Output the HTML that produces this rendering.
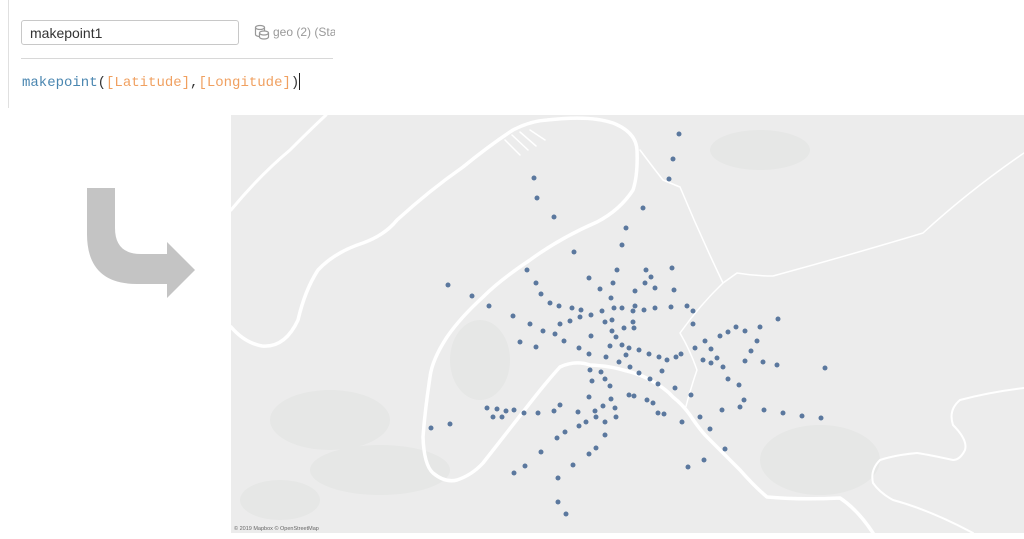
<!DOCTYPE html>
<html><head><meta charset="utf-8"><style>
html,body{margin:0;padding:0;background:#fff;width:1024px;height:539px;overflow:hidden;position:relative;font-family:"Liberation Sans",sans-serif}
.vl{position:absolute;left:8px;top:0;width:1px;height:108px;background:#e0e0e0}
.inp{position:absolute;left:21px;top:20px;width:218px;height:25px;border:1px solid #c8c8c8;border-radius:3px;box-sizing:border-box;font-size:14px;color:#333;padding:4px 0 0 8px;line-height:16px}
.geo{position:absolute;left:273px;top:25px;font-size:12px;color:#999;width:62px;overflow:hidden;white-space:nowrap}
.sep{position:absolute;left:21px;top:58px;width:312px;height:1px;background:#d8d8d8}
.f{position:absolute;left:22px;top:73px;font-family:"Liberation Mono",monospace;font-size:14px;white-space:nowrap;color:#333;line-height:18px}
.b{color:#4a86b0}.o{color:#f0a060}
.cur{display:inline-block;width:1px;height:17px;background:#222;vertical-align:-4px}
.map{position:absolute;left:231px;top:115px}
</style></head><body>
<div class="vl"></div>
<div class="inp">makepoint1</div>
<svg style="position:absolute;left:254px;top:24px" width="16" height="16" viewBox="0 0 16 16"><g fill="none" stroke="#999" stroke-width="1.2"><ellipse cx="6" cy="3.5" rx="4.5" ry="2"/><path d="M1.5 3.5v7c0 1.1 2 2 4.5 2M10.5 3.5v3"/><ellipse cx="10" cy="9" rx="4.5" ry="2"/><path d="M5.5 9v4c0 1.1 2 2 4.5 2s4.5-.9 4.5-2V9"/></g></svg>
<div class="geo">geo (2) (Sta</div>
<div class="sep"></div>
<div class="f"><span class="b">makepoint</span>(<span class="o">[Latitude]</span>,<span class="o">[Longitude]</span>)<span class="cur"></span></div>
<svg style="position:absolute;left:0;top:0" width="230" height="330"><path d="M87,188 H115 V228 Q115,254 141,254 H167 V242 L195,270 L167,298 V284 H137 Q87,284 87,234 Z" fill="#c4c4c4"/></svg>
<svg class="map" width="793" height="418" viewBox="231 115 793 418">
<rect x="231" y="115" width="793" height="418" fill="#ececec"/>
<g fill="#e6e7e6">
<ellipse cx="330" cy="420" rx="60" ry="30"/><ellipse cx="380" cy="470" rx="70" ry="25"/><ellipse cx="480" cy="360" rx="30" ry="40"/>
<ellipse cx="820" cy="460" rx="60" ry="35"/><ellipse cx="760" cy="150" rx="50" ry="20"/><ellipse cx="280" cy="500" rx="40" ry="20"/>
</g>
<g fill="none" stroke="#fff" stroke-linecap="round" stroke-linejoin="round">
<path stroke-width="3" d="M231,210 Q260,175 290,150 Q310,130 326,115"/>
<path stroke-width="3.5" d="M231,327 Q245,343 262,346 Q285,348 298,320 Q305,290 318,270 Q335,252 363,243 Q385,235 397,220 Q430,190 463,167 Q490,145 513,130 Q530,121 547,120 Q590,115 613,123 Q636,132 637,150 Q638,175 633,190 Q620,210 597,222 Q560,238 530,260 Q500,280 483,297 Q460,318 447,337 Q432,360 430,377 Q425,410 423,437 Q424,465 433,473 Q445,483 457,480 Q472,475 483,463 Q505,435 530,403 Q548,380 560,367 Q575,360 590,365 Q610,366 623,370 Q640,374 650,380 Q665,388 673,397 Q683,405 690,415 Q700,430 707,437 Q725,455 740,470 Q755,487 767,497 Q800,500 840,498 Q858,510 873,533"/>
<path stroke-width="1.5" d="M640,150 Q655,170 663,180 Q675,185 680,187 Q700,235 723,283 Q730,278 737,273 Q755,276 773,276 Q850,255 923,233 Q970,190 1024,153"/>
<path stroke-width="1.5" d="M723,283 Q700,305 680,333 Q690,350 697,370 Q690,390 685,410"/>
<path stroke-width="2" d="M1024,388 Q990,392 960,400 Q948,410 953,425 Q968,440 965,450 Q960,460 953,460 Q930,455 917,453 Q895,455 880,460 Q870,470 873,483 Q880,493 893,500 Q930,510 973,533"/>
<path stroke-width="1.5" d="M505,140 L520,155 M512,135 L528,150 M520,132 L536,146 M530,130 L545,140"/>
</g>
<g fill="#5b789e">
<circle cx="534" cy="178" r="2.5"/><circle cx="537" cy="198" r="2.5"/><circle cx="554" cy="217" r="2.5"/><circle cx="643" cy="208" r="2.5"/><circle cx="626" cy="228" r="2.5"/><circle cx="622" cy="245" r="2.5"/><circle cx="574" cy="252" r="2.5"/><circle cx="448" cy="285" r="2.5"/><circle cx="472" cy="296" r="2.5"/><circle cx="489" cy="306" r="2.5"/><circle cx="513" cy="316" r="2.5"/><circle cx="527" cy="270" r="2.5"/><circle cx="536" cy="283" r="2.5"/><circle cx="541" cy="294" r="2.5"/><circle cx="550" cy="303" r="2.5"/><circle cx="559" cy="306" r="2.5"/><circle cx="572" cy="308" r="2.5"/><circle cx="581" cy="310" r="2.5"/><circle cx="589" cy="278" r="2.5"/><circle cx="600" cy="289" r="2.5"/><circle cx="617" cy="270" r="2.5"/><circle cx="613" cy="283" r="2.5"/><circle cx="635" cy="291" r="2.5"/><circle cx="646" cy="270" r="2.5"/><circle cx="645" cy="283" r="2.5"/><circle cx="611" cy="298" r="2.5"/><circle cx="614" cy="308" r="2.5"/><circle cx="622" cy="308" r="2.5"/><circle cx="633" cy="311" r="2.5"/><circle cx="635" cy="306" r="2.5"/><circle cx="644" cy="310" r="2.5"/><circle cx="602" cy="311" r="2.5"/><circle cx="591" cy="315" r="2.5"/><circle cx="580" cy="317" r="2.5"/><circle cx="570" cy="321" r="2.5"/><circle cx="560" cy="324" r="2.5"/><circle cx="530" cy="324" r="2.5"/><circle cx="543" cy="331" r="2.5"/><circle cx="555" cy="334" r="2.5"/><circle cx="564" cy="341" r="2.5"/><circle cx="520" cy="342" r="2.5"/><circle cx="536" cy="347" r="2.5"/><circle cx="591" cy="336" r="2.5"/><circle cx="605" cy="322" r="2.5"/><circle cx="612" cy="320" r="2.5"/><circle cx="633" cy="322" r="2.5"/><circle cx="634" cy="328" r="2.5"/><circle cx="624" cy="328" r="2.5"/><circle cx="612" cy="331" r="2.5"/><circle cx="616" cy="337" r="2.5"/><circle cx="610" cy="346" r="2.5"/><circle cx="622" cy="345" r="2.5"/><circle cx="629" cy="348" r="2.5"/><circle cx="639" cy="350" r="2.5"/><circle cx="649" cy="354" r="2.5"/><circle cx="626" cy="355" r="2.5"/><circle cx="606" cy="357" r="2.5"/><circle cx="579" cy="348" r="2.5"/><circle cx="589" cy="354" r="2.5"/><circle cx="619" cy="362" r="2.5"/><circle cx="630" cy="367" r="2.5"/><circle cx="639" cy="373" r="2.5"/><circle cx="590" cy="370" r="2.5"/><circle cx="601" cy="372" r="2.5"/><circle cx="605" cy="379" r="2.5"/><circle cx="592" cy="381" r="2.5"/><circle cx="610" cy="386" r="2.5"/><circle cx="629" cy="395" r="2.5"/><circle cx="634" cy="396" r="2.5"/><circle cx="647" cy="400" r="2.5"/><circle cx="589" cy="397" r="2.5"/><circle cx="611" cy="399" r="2.5"/><circle cx="615" cy="408" r="2.5"/><circle cx="603" cy="406" r="2.5"/><circle cx="616" cy="417" r="2.5"/><circle cx="595" cy="411" r="2.5"/><circle cx="596" cy="417" r="2.5"/><circle cx="605" cy="422" r="2.5"/><circle cx="586" cy="422" r="2.5"/><circle cx="578" cy="412" r="2.5"/><circle cx="579" cy="426" r="2.5"/><circle cx="560" cy="405" r="2.5"/><circle cx="554" cy="411" r="2.5"/><circle cx="538" cy="413" r="2.5"/><circle cx="524" cy="413" r="2.5"/><circle cx="514" cy="410" r="2.5"/><circle cx="506" cy="411" r="2.5"/><circle cx="497" cy="409" r="2.5"/><circle cx="487" cy="408" r="2.5"/><circle cx="493" cy="417" r="2.5"/><circle cx="502" cy="417" r="2.5"/><circle cx="450" cy="424" r="2.5"/><circle cx="431" cy="428" r="2.5"/><circle cx="565" cy="432" r="2.5"/><circle cx="557" cy="438" r="2.5"/><circle cx="605" cy="435" r="2.5"/><circle cx="596" cy="448" r="2.5"/><circle cx="589" cy="454" r="2.5"/><circle cx="541" cy="452" r="2.5"/><circle cx="573" cy="465" r="2.5"/><circle cx="525" cy="466" r="2.5"/><circle cx="514" cy="473" r="2.5"/><circle cx="558" cy="478" r="2.5"/><circle cx="558" cy="502" r="2.5"/><circle cx="566" cy="514" r="2.5"/>
<circle cx="679" cy="134" r="2.5"/><circle cx="673" cy="159" r="2.5"/><circle cx="669" cy="179" r="2.5"/><circle cx="672" cy="268" r="2.5"/><circle cx="651" cy="277" r="2.5"/><circle cx="655" cy="288" r="2.5"/><circle cx="674" cy="290" r="2.5"/><circle cx="655" cy="308" r="2.5"/><circle cx="671" cy="307" r="2.5"/><circle cx="687" cy="306" r="2.5"/><circle cx="693" cy="311" r="2.5"/><circle cx="693" cy="324" r="2.5"/><circle cx="778" cy="319" r="2.5"/><circle cx="760" cy="327" r="2.5"/><circle cx="745" cy="331" r="2.5"/><circle cx="736" cy="327" r="2.5"/><circle cx="728" cy="332" r="2.5"/><circle cx="720" cy="336" r="2.5"/><circle cx="705" cy="341" r="2.5"/><circle cx="695" cy="348" r="2.5"/><circle cx="711" cy="349" r="2.5"/><circle cx="757" cy="341" r="2.5"/><circle cx="751" cy="351" r="2.5"/><circle cx="717" cy="358" r="2.5"/><circle cx="703" cy="360" r="2.5"/><circle cx="711" cy="363" r="2.5"/><circle cx="723" cy="367" r="2.5"/><circle cx="745" cy="361" r="2.5"/><circle cx="763" cy="362" r="2.5"/><circle cx="777" cy="365" r="2.5"/><circle cx="825" cy="368" r="2.5"/><circle cx="681" cy="354" r="2.5"/><circle cx="676" cy="357" r="2.5"/><circle cx="667" cy="360" r="2.5"/><circle cx="659" cy="357" r="2.5"/><circle cx="662" cy="371" r="2.5"/><circle cx="650" cy="379" r="2.5"/><circle cx="658" cy="384" r="2.5"/><circle cx="675" cy="388" r="2.5"/><circle cx="691" cy="395" r="2.5"/><circle cx="728" cy="379" r="2.5"/><circle cx="739" cy="385" r="2.5"/><circle cx="744" cy="400" r="2.5"/><circle cx="740" cy="407" r="2.5"/><circle cx="722" cy="410" r="2.5"/><circle cx="764" cy="410" r="2.5"/><circle cx="783" cy="413" r="2.5"/><circle cx="802" cy="416" r="2.5"/><circle cx="821" cy="418" r="2.5"/><circle cx="653" cy="403" r="2.5"/><circle cx="658" cy="413" r="2.5"/><circle cx="664" cy="414" r="2.5"/><circle cx="682" cy="422" r="2.5"/><circle cx="700" cy="417" r="2.5"/><circle cx="710" cy="429" r="2.5"/><circle cx="725" cy="449" r="2.5"/><circle cx="704" cy="460" r="2.5"/><circle cx="688" cy="467" r="2.5"/>
</g>
<text x="234" y="530" font-family="Liberation Sans,sans-serif" font-size="5.5" fill="#666">© 2019 Mapbox © OpenStreetMap</text>
</svg>
</body></html>
